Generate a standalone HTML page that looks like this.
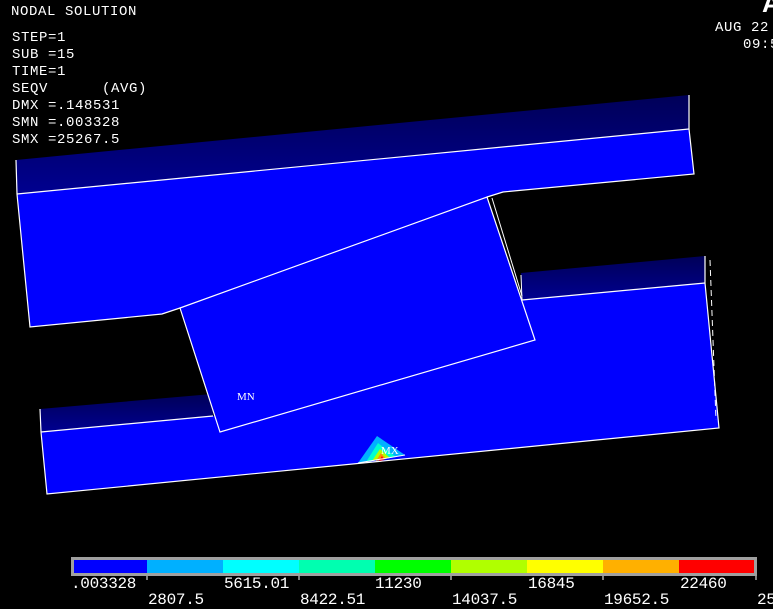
<!DOCTYPE html>
<html><head><style>
html,body{margin:0;padding:0;background:#000;width:773px;height:603px;overflow:hidden}
.t{position:absolute;color:#fff;font-family:"Liberation Mono",monospace;font-size:14px;letter-spacing:0.6px;line-height:17px;white-space:pre}
.l{position:absolute;color:#fff;font-family:"Liberation Mono",monospace;font-size:16px;white-space:pre;line-height:16px;letter-spacing:-0.3px}
</style></head><body>
<svg width="773" height="603" style="position:absolute;left:0;top:0">
<defs>
<linearGradient id="g1" x1="0" y1="1" x2="0" y2="0"><stop offset="0" stop-color="#000090"/><stop offset="1" stop-color="#000058"/></linearGradient>
</defs>
<polygon points="16,160 689,95 689,129 17,194" fill="url(#g1)"/>
<polygon points="17,194 689,129 694,174 503,192 487,197 180,308 162,314 30,327" fill="#0000ff"/>
<polyline points="16,160 17,194 30,327 162,314 180,308" fill="none" stroke="#fff" stroke-width="1.2"/>
<polyline points="17,194 689,129" fill="none" stroke="#fff" stroke-width="1.2"/>
<polyline points="689,95 689,129 694,174 503,192 487,197" fill="none" stroke="#fff" stroke-width="1.2"/>
<polygon points="40,409 212,394 213,416 41,432" fill="url(#g1)"/>
<polygon points="521,273 705,256 705,283 522,300" fill="url(#g1)"/>
<polygon points="41,432 213,416 522,300 705,283 719,428 47,494" fill="#0000ff"/>
<polyline points="40,409 41,432 47,494 719,428 705,283 705,256" fill="none" stroke="#fff" stroke-width="1.2"/>
<polyline points="41,432 213,416" fill="none" stroke="#fff" stroke-width="1.2"/>
<polyline points="522,300 705,283" fill="none" stroke="#fff" stroke-width="1.2"/>
<line x1="710" y1="260" x2="716" y2="420" stroke="#fff" stroke-width="1" stroke-dasharray="6,4"/>
<line x1="212" y1="398" x2="222" y2="432" stroke="#fff" stroke-width="1"/>
<line x1="521" y1="275" x2="522" y2="300" stroke="#fff" stroke-width="1"/>
<polygon points="180,308 487,197 535,340 220,432" fill="#0000ff" stroke="#fff" stroke-width="1.2"/>
<line x1="492" y1="198" x2="522" y2="296" stroke="#fff" stroke-width="1"/>
<polygon points="358,463 377,436 405,455" fill="#00b0ff"/>
<polygon points="366,462 378,443 396,457" fill="#00ffd0"/>
<polygon points="372,461 380,449 390,458" fill="#b0ff00"/>
<polygon points="376,461 381,453 386,459" fill="#ff9000"/>
<polygon points="379,461 382,456 384,460" fill="#ff0000"/>
<polyline points="358,463 405,455" fill="none" stroke="#fff" stroke-width="1"/>
<rect x="71" y="557" width="686" height="19" fill="#a0a0a0"/>
<rect x="74" y="560" width="73" height="13" fill="#0000ff"/>
<rect x="147" y="560" width="76" height="13" fill="#00b0ff"/>
<rect x="223" y="560" width="76" height="13" fill="#00ffff"/>
<rect x="299" y="560" width="76" height="13" fill="#00ffb0"/>
<rect x="375" y="560" width="76" height="13" fill="#00ff00"/>
<rect x="451" y="560" width="76" height="13" fill="#b0ff00"/>
<rect x="527" y="560" width="76" height="13" fill="#ffff00"/>
<rect x="603" y="560" width="76" height="13" fill="#ffb000"/>
<rect x="679" y="560" width="75" height="13" fill="#ff0000"/>
<g stroke="#fff" stroke-width="1">
<line x1="147" y1="576" x2="147" y2="580"/><line x1="299" y1="576" x2="299" y2="580"/><line x1="451" y1="576" x2="451" y2="580"/><line x1="603" y1="576" x2="603" y2="580"/><line x1="756" y1="576" x2="756" y2="580"/>
</g>
</svg>
<div class="t" style="left:11px;top:4px">NODAL SOLUTION</div>
<div class="t" style="left:12px;top:30px">STEP=1
SUB =15
TIME=1
SEQV      (AVG)
DMX =.148531
SMN =.003328
SMX =25267.5</div>
<div class="t" style="left:715px;top:20px">AUG 22</div>
<div class="t" style="left:743px;top:37px">09:5</div>
<div style="position:absolute;left:762px;top:-12px;color:#fff;font:bold 26px 'Liberation Sans',sans-serif">AN</div>
<div class="t" style="left:237px;top:389px;font-family:'Liberation Serif',serif;font-size:11px;letter-spacing:0">MN</div>
<div class="t" style="left:381px;top:443px;font-family:'Liberation Serif',serif;font-size:11px;letter-spacing:0">MX</div>
<div class="l" style="left:71px;top:576px">.003328</div>
<div class="l" style="left:224px;top:576px">5615.01</div>
<div class="l" style="left:375px;top:576px">11230</div>
<div class="l" style="left:528px;top:576px">16845</div>
<div class="l" style="left:680px;top:576px">22460</div>
<div class="l" style="left:148px;top:592px">2807.5</div>
<div class="l" style="left:300px;top:592px">8422.51</div>
<div class="l" style="left:452px;top:592px">14037.5</div>
<div class="l" style="left:604px;top:592px">19652.5</div>
<div class="l" style="left:757px;top:592px">25</div>
</body></html>
